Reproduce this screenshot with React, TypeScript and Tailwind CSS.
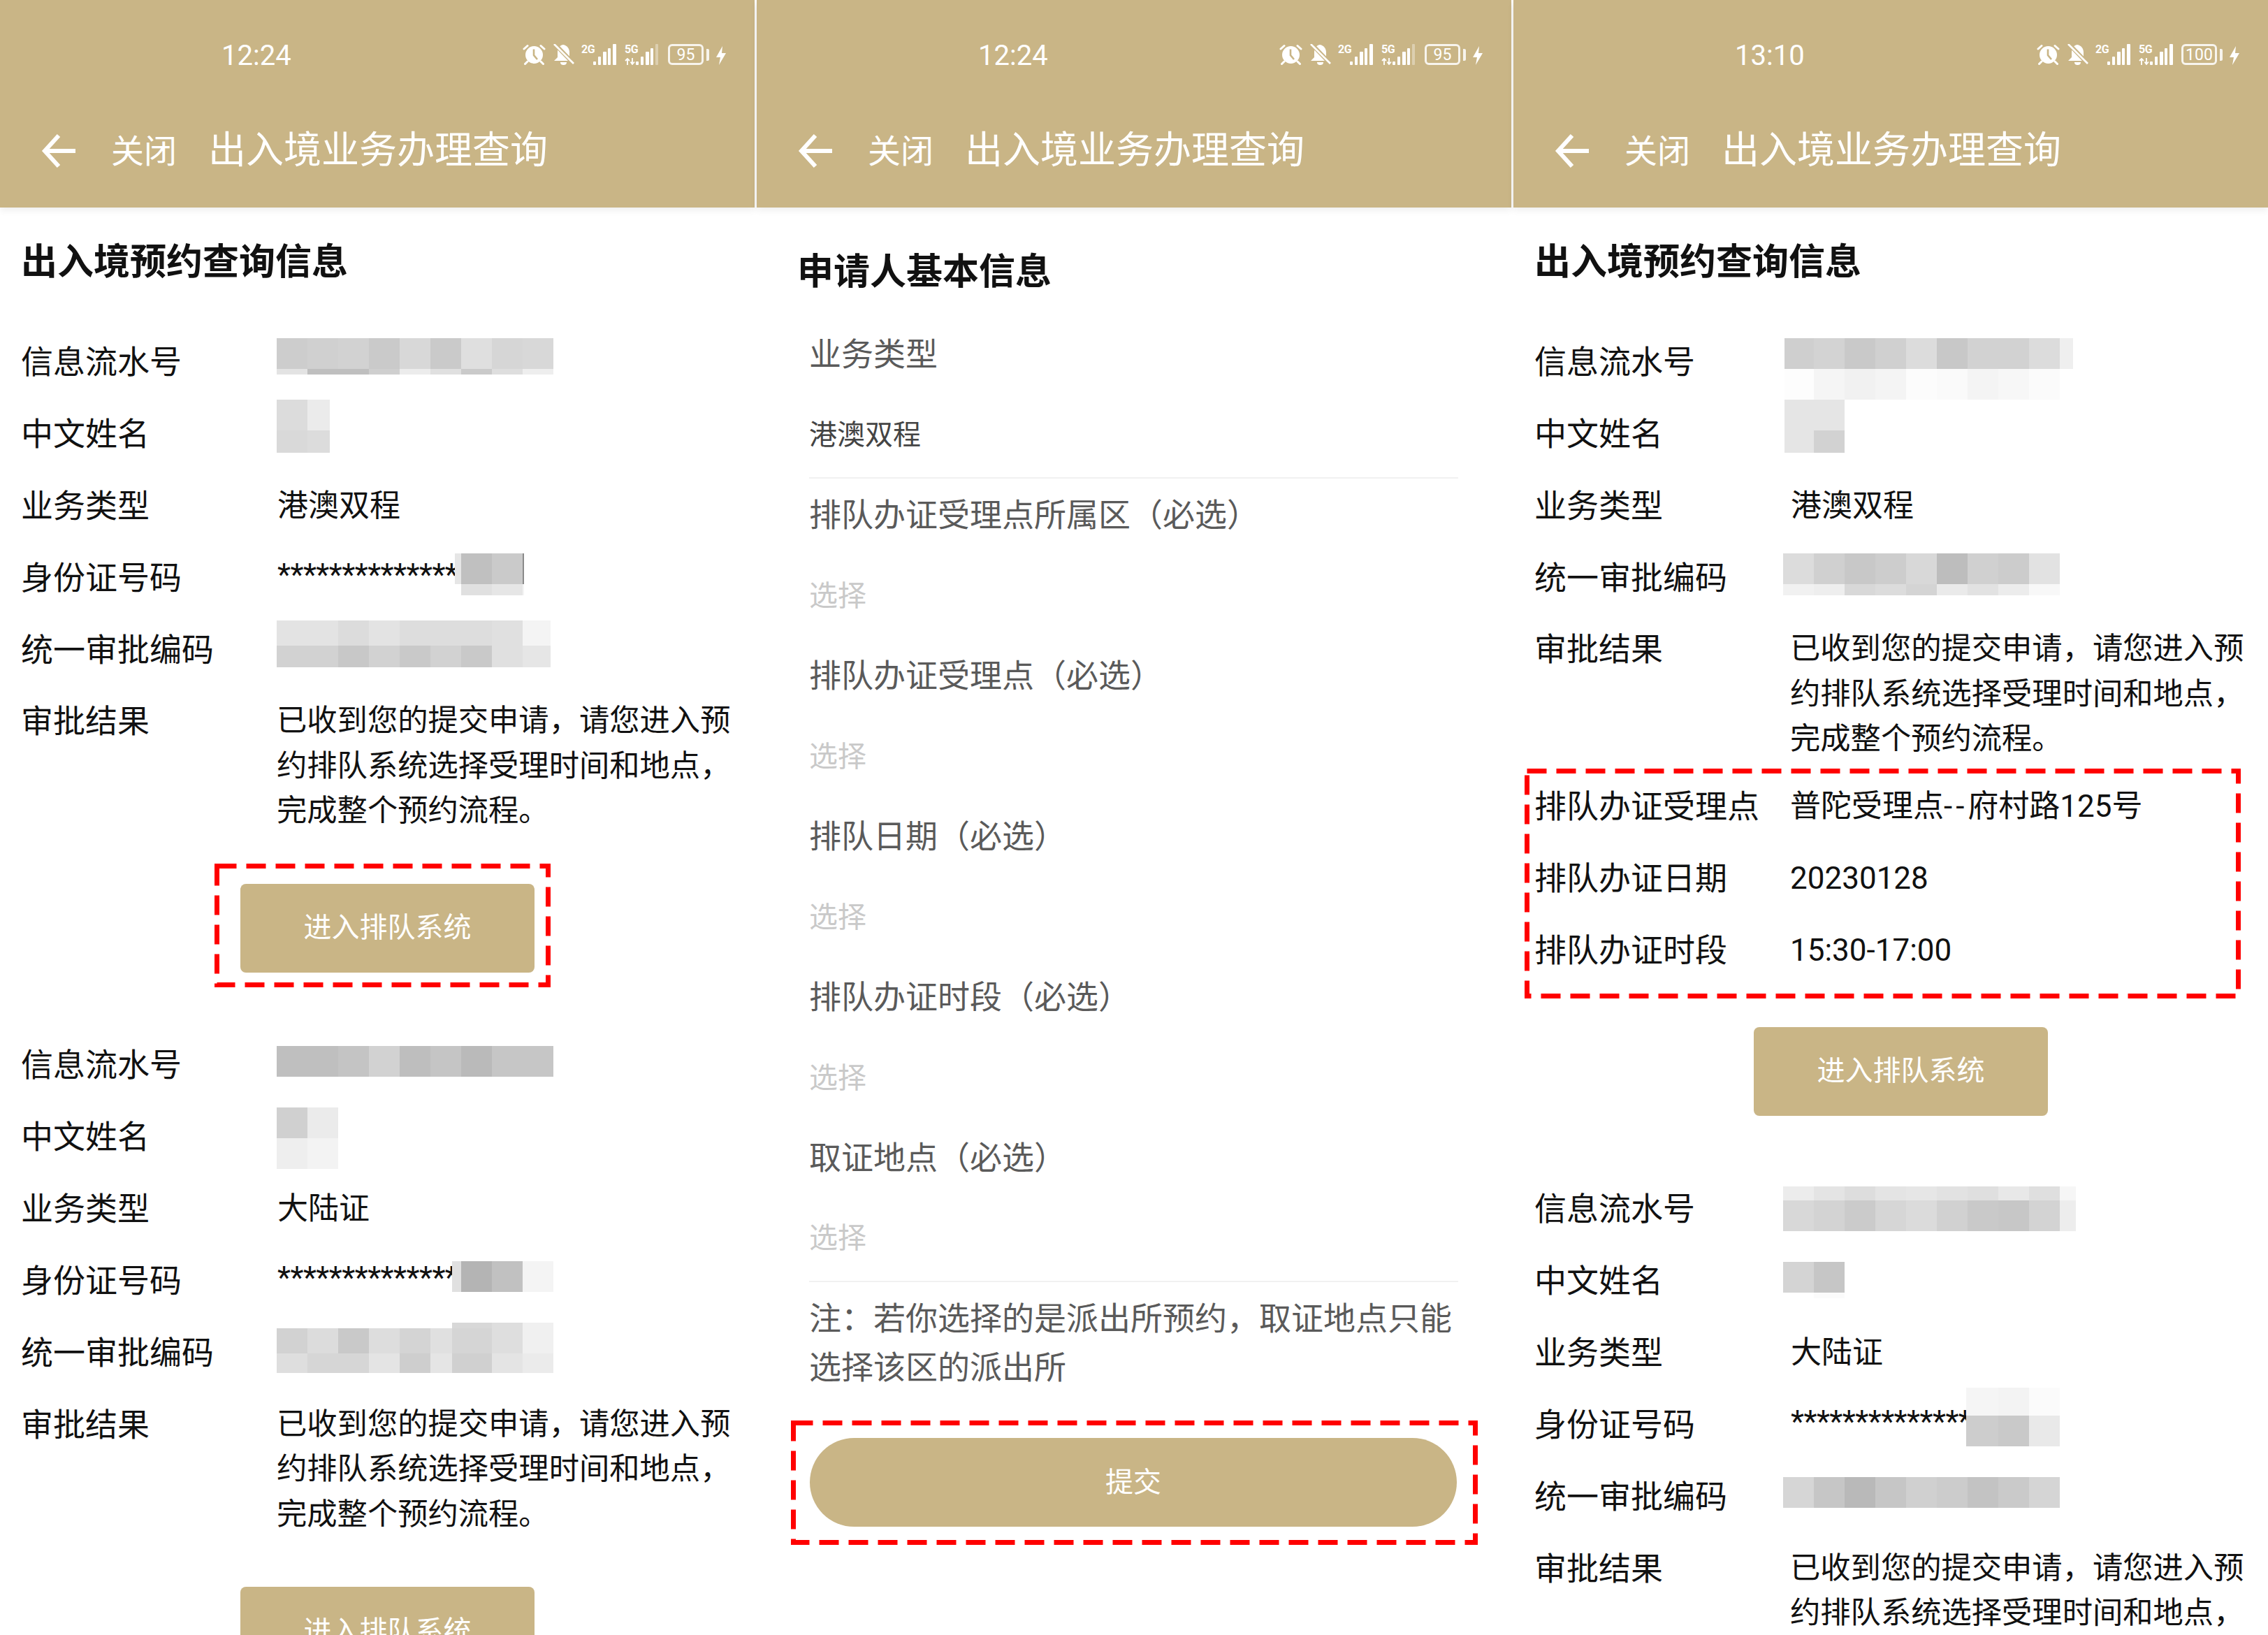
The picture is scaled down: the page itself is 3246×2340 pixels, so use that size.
import type { ReactNode } from "react";

type MosaicProps = {
  cols: number[];
  rows: [number, string[]][];
  className?: string;
};

// pixelated privacy blocks, colours read off the screenshot
const Mosaic = ({ cols, rows, className = "" }: MosaicProps) => (
  <div
    className={`grid shrink-0 self-start ${className}`}
    style={{
      gridTemplateColumns: cols.map((c) => `${c}px`).join(" "),
      gridTemplateRows: rows.map((r) => `${r[0]}px`).join(" "),
    }}
  >
    {rows.flatMap((row, r) =>
      row[1].map((color, c) => (
        <div key={`${r}-${c}`} style={{ backgroundColor: color || "transparent" }} />
      ))
    )}
  </div>
);

const DashBox = ({ w, h, className }: { w: number; h: number; className: string }) => (
  <svg width={w} height={h} className={`absolute pointer-events-none ${className}`}>
    <rect
      x={3.5}
      y={3.5}
      width={w - 7}
      height={h - 7}
      fill="none"
      stroke="#ff0000"
      strokeWidth={7}
      strokeDasharray="28 14"
    />
  </svg>
);

const AlarmIcon = () => (
  <svg width={33} height={30} viewBox="0 0 33 30" className="shrink-0">
    <circle cx={16.5} cy={15.5} r={12.5} fill="#fff" />
    <path d="M16 7.5V16L21 22" fill="none" stroke="#c9b586" strokeWidth={2.6} />
    <path d="M2 7L7 2.5M31 7L26 2.5M7 25L3.5 28.5M26 25L29.5 28.5" stroke="#fff" strokeWidth={3} strokeLinecap="round" />
  </svg>
);

const BellOffIcon = () => (
  <svg width={30} height={30} viewBox="0 0 30 30" className="shrink-0">
    <path d="M14 1C8 2 6 7 6 12V19L1 24H26L23 19V12C23 7 20 2 14 1Z" fill="#fff" />
    <path d="M10 26H19C19 29 17 30 14.5 30C12 30 10 29 10 26Z" fill="#fff" />
    <path d="M2 0L29 28" stroke="#c9b586" strokeWidth={6} />
    <path d="M1 0L29 28" stroke="#fff" strokeWidth={2.6} />
  </svg>
);

const Bars = ({ dim }: { dim?: boolean }) => (
  <svg width={33} height={30} viewBox="0 0 33 30" className="shrink-0">
    <rect x={0} y={25} width={4} height={5} rx={1} fill="#fff" />
    <rect x={7} y={18} width={4} height={12} rx={1} fill="#fff" />
    <rect x={14} y={11} width={5} height={19} rx={1} fill="#fff" />
    <rect x={21} y={6} width={4} height={24} rx={1} fill="#fff" />
    <rect x={28} y={0} width={dim ? 4 : 5} height={30} rx={1} fill="#fff" opacity={dim ? 0.35 : 1} />
  </svg>
);

const StatusIcons = ({ battery, dimSignal }: { battery: string; dimSignal?: boolean }) => (
  <div className="flex items-center">
    <AlarmIcon />
    <div className="ml-[11px]">
      <BellOffIcon />
    </div>
    <div className="ml-[10px] flex h-[30px]">
      <span className="w-[17px] text-[16px] leading-[15px] font-bold tracking-[-0.5px] text-white">2G</span>
      <Bars />
    </div>
    <div className="ml-[12px] flex h-[30px]">
      <div className="flex w-[16px] flex-col justify-between">
        <span className="text-[16px] leading-[15px] font-bold tracking-[-0.5px] text-white">5G</span>
        <svg width={16} height={10} viewBox="0 0 16 10">
          <path d="M4 10V1M1 4L4 1L7 4" fill="none" stroke="#fff" strokeWidth={1.8} />
          <path d="M11 0V9M8.5 5.5L11 9L14 5.5" fill="none" stroke="#fff" strokeWidth={1.8} />
        </svg>
      </div>
      <Bars dim={dimSignal} />
    </div>
    <div className={`${dimSignal ? "ml-[13px]" : "ml-[12px]"} flex h-[30px] w-[51px] items-center justify-center rounded-[6px] border-[3px] border-white/85 text-[23px] leading-none text-white`}>
      {battery}
    </div>
    <div className="ml-[4px] h-[17px] w-[4px] rounded-r-[2px] bg-white/85" />
    <svg width={14} height={27} viewBox="0 0 14 27" className="ml-[10px] mt-[3px] shrink-0">
      <path d="M9 0L0 16H6L4 27L14 10H8Z" fill="#fff" />
    </svg>
  </div>
);

const Header = ({ time, battery, dimSignal }: { time: string; battery: string; dimSignal?: boolean }) => (
  <header className="relative z-10 h-[297px] bg-[#c9b586] pt-[63px] text-white shadow-[0_4px_10px_rgba(0,0,0,0.07)]">
    <div className="flex h-[30px] items-center justify-between pl-[317px] pr-[41px]">
      <span className="mt-[3px] text-[40px] leading-none">{time}</span>
      <StatusIcons battery={battery} dimSignal={dimSignal} />
    </div>
    <div className="mt-[73px] flex h-[100px] items-center pl-[58px]">
      <svg width={50} height={48} viewBox="0 0 50 48" className="shrink-0">
        <path d="M50 24H8M26 2L6 24L26 46" fill="none" stroke="#fff" strokeWidth={6} />
      </svg>
      <span className="ml-[51px] w-[139px] text-[47px] leading-none">关闭</span>
      <span className="text-[54px] leading-none">出入境业务办理查询</span>
    </div>
  </header>
);

const Row = ({ label, children }: { label: string; children: ReactNode }) => (
  <div className="flex h-[103px] text-[#111]">
    <div className="flex w-[396px] shrink-0 items-center pl-[30px] text-[46px] leading-none">{label}</div>
    <div className="flex min-w-0 flex-1 items-center text-[44px] leading-none">{children}</div>
  </div>
);

const ResultRow = () => (
  <div className="flex pt-[19px] text-[#111]">
    <div className="w-[396px] shrink-0 pl-[30px] text-[46px] leading-[64px]">审批结果</div>
    <p className="w-[664px] text-[43.3px] leading-[64.5px]">
      已收到您的提交申请，请您进入预约排队系统选择受理时间和地点，完成整个预约流程。
    </p>
  </div>
);

const QueueButton = ({ children }: { children?: ReactNode }) => (
  <div className="relative ml-[344px] flex h-[127px] w-[421px] items-center justify-center rounded-[8px] bg-[#c9b586] text-[40px] leading-none text-white">
    进入排队系统
    {children}
  </div>
);

const Stars = ({ className }: { className: string }) => (
  <span className={`mb-[8px] overflow-hidden whitespace-nowrap pl-[1px] text-[44px] tracking-[-0.5px] ${className}`}>
    **************
  </span>
);

const ChooseField = ({ label, last }: { label: string; last?: boolean }) => (
  <>
    <div className="flex h-[104px] items-center text-[46px] leading-none text-[#5a5a5a]">{label}</div>
    <div className={`flex h-[126px] items-center pt-[2px] text-[41px] leading-none text-[#c9c9c9] ${last ? "border-b-2 border-[#f1f1f1]" : ""}`}>
      选择
    </div>
  </>
);

const LeftPanel = () => (
  <section className="w-[1080px] shrink-0">
    <Header time="12:24" battery="95" dimSignal />
    <h2 className="mt-[29px] flex h-[100px] items-center pl-[30px] text-[52px] leading-none font-bold text-[#111]">
      出入境预约查询信息
    </h2>
    <div className="mt-[40px]">
      <Row label="信息流水号">
        <Mosaic
          className="mt-[18px]"
          cols={[44, 44, 44, 44, 44, 44, 44, 44, 44]}
          rows={[
            [44, ["#cdcdcd", "#d0d0d0", "#d2d2d2", "#cacaca", "#d8d8d8", "#cacaca", "#dfdfdf", "#d6d6d6", "#d8d8d8"]],
            [8, ["#e3e3e3", "#bfbfbf", "#bfbfbf", "#cfcfcf", "#ececec", "#e0e0e0", "#cacaca", "#dedede", "#eeeeee"]],
          ]}
        />
      </Row>
      <Row label="中文姓名">
        <Mosaic
          className="mt-[3px]"
          cols={[44, 32]}
          rows={[
            [44, ["#dcdcdc", "#ebebeb"]],
            [32, ["#d9d9d9", "#dcdcdc"]],
          ]}
        />
      </Row>
      <Row label="业务类型">
        <span className="pl-[1px]">港澳双程</span>
      </Row>
      <Row label="身份证号码">
        <Stars className="w-[255px]" />
        <Mosaic
          className="mt-[17px]"
          cols={[9, 44, 44, 2]}
          rows={[
            [44, ["#e6e6e6", "#c0c0c0", "#cacaca", "#8a8a8a"]],
            [16, ["", "#e0e0e0", "#e6e6e6", "#f4f4f4"]],
          ]}
        />
      </Row>
      <Row label="统一审批编码">
        <Mosaic
          className="mt-[10px]"
          cols={[44, 44, 44, 44, 44, 44, 44, 44, 40]}
          rows={[
            [36, ["#e3e3e3", "#e3e3e3", "#dcdcdc", "#e3e3e3", "#dddddd", "#dddddd", "#dddddd", "#e0e0e0", "#f4f4f4"]],
            [31, ["#d2d2d2", "#d2d2d2", "#c8c8c8", "#d2d2d2", "#c9c9c9", "#d2d2d2", "#c9c9c9", "#e0e0e0", "#e6e6e6"]],
          ]}
        />
      </Row>
      <ResultRow />
    </div>
    <div className="mt-[71px]">
      <QueueButton>
        <DashBox w={481} h={177} className="left-[-37px] top-[-29px]" />
      </QueueButton>
    </div>
    <div className="mt-[81px]">
      <Row label="信息流水号">
        <Mosaic
          className="mt-[24px]"
          cols={[44, 44, 44, 44, 44, 44, 44, 44, 44]}
          rows={[[44, ["#bfbfbf", "#bfbfbf", "#c4c4c4", "#d2d2d2", "#bebebe", "#c5c5c5", "#bababa", "#c6c6c6", "#c6c6c6"]]]}
        />
      </Row>
      <Row label="中文姓名">
        <Mosaic
          className="mt-[9px]"
          cols={[44, 44]}
          rows={[
            [44, ["#d0d0d0", "#ebebeb"]],
            [44, ["#eeeeee", "#f3f3f3"]],
          ]}
        />
      </Row>
      <Row label="业务类型">
        <span className="pl-[1px]">大陆证</span>
      </Row>
      <Row label="身份证号码">
        <Stars className="w-[251px]" />
        <Mosaic
          className="mt-[23px]"
          cols={[13, 44, 44, 44]}
          rows={[[44, ["#e0e0e0", "#b4b4b4", "#c1c1c1", "#f4f4f4"]]]}
        />
      </Row>
      <Row label="统一审批编码">
        <Mosaic
          className="mt-[8px]"
          cols={[44, 44, 44, 44, 44, 31, 13, 44, 44, 44]}
          rows={[
            [8, ["", "", "", "", "", "", "#d8d8d8", "#d8d8d8", "#dedede", "#f0f0f0"]],
            [36, ["#d2d2d2", "#dcdcdc", "#c9c9c9", "#dddddd", "#d4d4d4", "#e0e0e0", "#d5d5d5", "#d5d5d5", "#dedede", "#f0f0f0"]],
            [28, ["#dedede", "#d6d6d6", "#d6d6d6", "#e4e4e4", "#cecece", "#e5e5e5", "#d0d0d0", "#d0d0d0", "#e4e4e4", "#ebebeb"]],
          ]}
        />
      </Row>
      <ResultRow />
    </div>
    <div className="mt-[71px]">
      <QueueButton />
    </div>
  </section>
);

const MiddlePanel = () => (
  <section className="relative w-[1080px] shrink-0">
    <Header time="12:24" battery="95" dimSignal />
    <div className="pl-[75px] pr-[76px]">
      <h2 className="ml-[-17px] mt-[43px] flex h-[100px] items-center text-[52px] leading-none font-bold text-[#111]">
        申请人基本信息
      </h2>
      <div className="mt-[9px] flex h-[116px] items-center text-[46px] leading-none text-[#5a5a5a]">业务类型</div>
      <div className="flex h-[120px] items-center border-b-2 border-[#f1f1f1] pb-[2px] text-[40px] leading-none text-[#444]">
        港澳双程
      </div>
      <ChooseField label="排队办证受理点所属区（必选）" />
      <ChooseField label="排队办证受理点（必选）" />
      <ChooseField label="排队日期（必选）" />
      <ChooseField label="排队办证时段（必选）" />
      <ChooseField label="取证地点（必选）" last />
      <p className="pt-[17px] text-[46px] leading-[70px] text-[#5a5a5a]">
        注：若你选择的是派出所预约，取证地点只能选择该区的派出所
      </p>
      <div className="relative ml-[1px] mt-[66px] flex h-[127px] w-[926px] items-center justify-center rounded-full bg-[#c9b586] text-[40px] leading-none text-white">
        提交
        <DashBox w={983} h={178} className="left-[-27px] top-[-25px]" />
      </div>
    </div>
  </section>
);

const RightPanel = () => (
  <section className="w-[1080px] shrink-0">
    <Header time="13:10" battery="100" />
    <h2 className="mt-[29px] flex h-[100px] items-center pl-[30px] text-[52px] leading-none font-bold text-[#111]">
      出入境预约查询信息
    </h2>
    <div className="mt-[40px]">
      <Row label="信息流水号">
        <Mosaic
          className="ml-[-8px] mt-[18px]"
          cols={[42, 44, 44, 44, 44, 44, 44, 44, 44, 19]}
          rows={[
            [44, ["#cfcfcf", "#d3d3d3", "#c9c9c9", "#d0d0d0", "#dcdcdc", "#c8c8c8", "#d2d2d2", "#d2d2d2", "#dcdcdc", "#efefef"]],
            [44, ["#fdfdfd", "#f5f5f5", "#f1f1f1", "#f4f4f4", "#fcfcfc", "#fafafa", "#f4f4f4", "#f7f7f7", "#fbfbfb", ""]],
          ]}
        />
      </Row>
      <Row label="中文姓名">
        <Mosaic
          className="ml-[-8px] mt-[3px]"
          cols={[42, 44]}
          rows={[
            [44, ["#e5e5e5", "#e5e5e5"]],
            [32, ["#e5e5e5", "#d2d2d2"]],
          ]}
        />
      </Row>
      <Row label="业务类型">
        <span className="pl-[1px]">港澳双程</span>
      </Row>
      <Row label="统一审批编码">
        <Mosaic
          className="ml-[-10px] mt-[17px]"
          cols={[44, 44, 44, 44, 44, 44, 44, 44, 44]}
          rows={[
            [44, ["#dcdcdc", "#d0d0d0", "#c8c8c8", "#cdcdcd", "#d8d8d8", "#bdbdbd", "#d0d0d0", "#cccccc", "#e2e2e2"]],
            [16, ["#f1f1f1", "#eeeeee", "#d8d8d8", "#dcdcdc", "#d4d4d4", "#eaeaea", "#e2e2e2", "#ececec", "#f8f8f8"]],
          ]}
        />
      </Row>
      <ResultRow />
    </div>
    <div className="relative mt-[12px]">
      <Row label="排队办证受理点">
        <span>
          普陀受理点<span className="tracking-[5px]">--</span>府村路125号
        </span>
      </Row>
      <Row label="排队办证日期">20230128</Row>
      <Row label="排队办证时段">15:30-17:00</Row>
      <DashBox w={1025} h={329} className="left-[16px] top-[-3px]" />
    </div>
    <div className="mt-[58px]">
      <QueueButton />
    </div>
    <div className="mt-[82px]">
      <Row label="信息流水号">
        <Mosaic
          className="ml-[-10px] mt-[19px]"
          cols={[44, 44, 44, 44, 44, 44, 44, 44, 44, 23]}
          rows={[
            [20, ["#ececec", "#e4e4e4", "#dddddd", "#e4e4e4", "#e6e6e6", "#e2e2e2", "#dfdfdf", "#e8e8e8", "#dfdfdf", "#f6f6f6"]],
            [44, ["#d8d8d8", "#d3d3d3", "#cbcbcb", "#d6d6d6", "#dbdbdb", "#d1d1d1", "#c9c9c9", "#c7c7c7", "#d3d3d3", "#ededed"]],
          ]}
        />
      </Row>
      <Row label="中文姓名">
        <Mosaic
          className="ml-[-10px] mt-[24px]"
          cols={[44, 44]}
          rows={[
            [44, ["#d4d4d4", "#c6c6c6"]],
            [8, ["", "#fbfbfb"]],
          ]}
        />
      </Row>
      <Row label="业务类型">
        <span className="pl-[1px]">大陆证</span>
      </Row>
      <Row label="身份证号码">
        <Stars className="w-[252px]" />
        <Mosaic
          className="mt-[-2px]"
          cols={[46, 44, 44]}
          rows={[
            [40, ["#f5f5f5", "#f3f3f3", "#fbfbfb"]],
            [44, ["#cdcdcd", "#c9c9c9", "#e9e9e9"]],
          ]}
        />
      </Row>
      <Row label="统一审批编码">
        <Mosaic
          className="ml-[-10px] mt-[23px]"
          cols={[44, 44, 44, 44, 44, 44, 44, 44, 44]}
          rows={[[44, ["#d6d6d6", "#c6c6c6", "#b9b9b9", "#c6c6c6", "#d0d0d0", "#cccccc", "#c3c3c3", "#cacaca", "#d5d5d5"]]]}
        />
      </Row>
      <ResultRow />
    </div>
  </section>
);

const App = () => (
  <div className="flex h-[2340px] w-[3246px] gap-[3px] overflow-hidden bg-white [font-family:Roboto,'Noto_Sans_CJK_SC',sans-serif]">
    <LeftPanel />
    <MiddlePanel />
    <RightPanel />
  </div>
);

export default App;
